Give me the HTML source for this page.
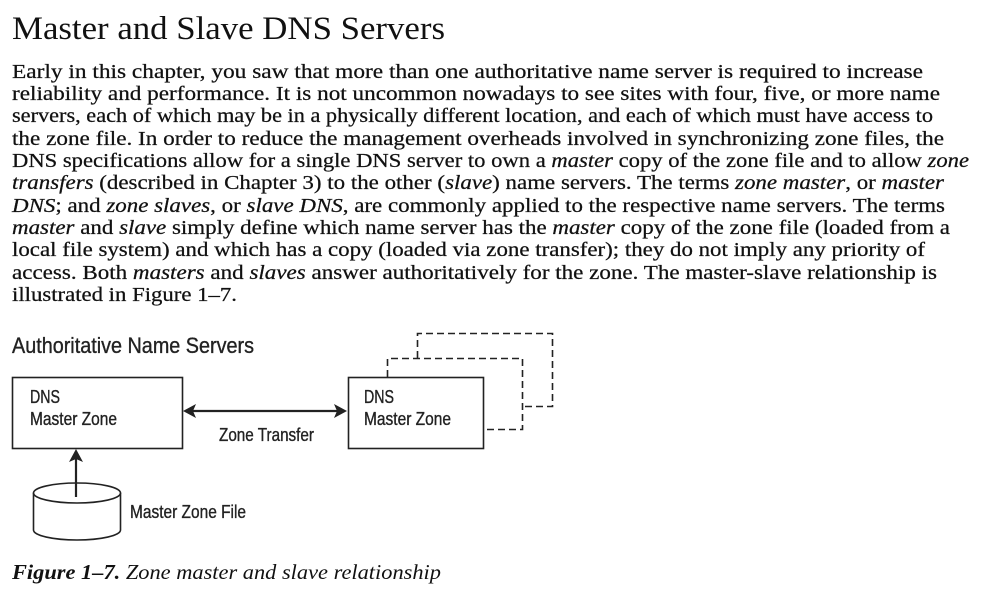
<!DOCTYPE html>
<html><head><meta charset="utf-8"><style>
html,body{margin:0;padding:0;background:#fff;width:988px;height:594px;overflow:hidden}
svg{display:block}
.s{font-family:"Liberation Serif",serif;font-size:20px;fill:#111;stroke:#111;stroke-width:0.25}
.d{font-family:"Liberation Sans",sans-serif;fill:#222;stroke:#222;stroke-width:0.35}
</style></head><body>
<svg width="988" height="594" viewBox="0 0 988 594" xmlns="http://www.w3.org/2000/svg">
<text x="12" y="39" font-family="Liberation Serif, serif" font-size="33" fill="#111" textLength="433" lengthAdjust="spacingAndGlyphs">Master and Slave DNS Servers</text>
<g class="s">
<text x="12" y="78" textLength="911" lengthAdjust="spacingAndGlyphs">Early in this chapter, you saw that more than one authoritative name server is required to increase</text>
<text x="12" y="100" textLength="928" lengthAdjust="spacingAndGlyphs">reliability and performance. It is not uncommon nowadays to see sites with four, five, or more name</text>
<text x="12" y="122" textLength="921" lengthAdjust="spacingAndGlyphs">servers, each of which may be in a physically different location, and each of which must have access to</text>
<text x="12" y="145" textLength="932" lengthAdjust="spacingAndGlyphs">the zone file. In order to reduce the management overheads involved in synchronizing zone files, the</text>
<text x="12" y="167" textLength="957" lengthAdjust="spacingAndGlyphs">DNS specifications allow for a single DNS server to own a <tspan font-style="italic">master</tspan> copy of the zone file and to allow <tspan font-style="italic">zone</tspan></text>
<text x="12" y="189" textLength="932" lengthAdjust="spacingAndGlyphs"><tspan font-style="italic">transfers</tspan> (described in Chapter 3) to the other (<tspan font-style="italic">slave</tspan>) name servers. The terms <tspan font-style="italic">zone master</tspan>, or <tspan font-style="italic">master</tspan></text>
<text x="12" y="212" textLength="933" lengthAdjust="spacingAndGlyphs"><tspan font-style="italic">DNS</tspan>; and <tspan font-style="italic">zone slaves</tspan>, or <tspan font-style="italic">slave DNS</tspan>, are commonly applied to the respective name servers. The terms</text>
<text x="12" y="234" textLength="938" lengthAdjust="spacingAndGlyphs"><tspan font-style="italic">master</tspan> and <tspan font-style="italic">slave</tspan> simply define which name server has the <tspan font-style="italic">master</tspan> copy of the zone file (loaded from a</text>
<text x="12" y="256" textLength="913" lengthAdjust="spacingAndGlyphs">local file system) and which has a copy (loaded via zone transfer); they do not imply any priority of</text>
<text x="12" y="279" textLength="925" lengthAdjust="spacingAndGlyphs">access. Both <tspan font-style="italic">masters</tspan> and <tspan font-style="italic">slaves</tspan> answer authoritatively for the zone. The master-slave relationship is</text>
<text x="12" y="301" textLength="225" lengthAdjust="spacingAndGlyphs">illustrated in Figure 1–7.</text>
</g>
<g class="d">
<text x="12" y="353" font-size="22" textLength="242" lengthAdjust="spacingAndGlyphs">Authoritative Name Servers</text>
<text x="30" y="403" font-size="18" textLength="30" lengthAdjust="spacingAndGlyphs">DNS</text>
<text x="30" y="425" font-size="18" textLength="87" lengthAdjust="spacingAndGlyphs">Master Zone</text>
<text x="364" y="403" font-size="18" textLength="30" lengthAdjust="spacingAndGlyphs">DNS</text>
<text x="364" y="425" font-size="18" textLength="87" lengthAdjust="spacingAndGlyphs">Master Zone</text>
<text x="219" y="441" font-size="18" textLength="95" lengthAdjust="spacingAndGlyphs">Zone Transfer</text>
<text x="130" y="518" font-size="18" textLength="116" lengthAdjust="spacingAndGlyphs">Master Zone File</text>
</g>
<g fill="none" stroke="#222" stroke-width="1.6">
<rect x="12.5" y="377.5" width="170" height="71"/>
<rect x="348.5" y="377.5" width="135" height="71"/>
<g stroke-dasharray="7,4">
<path d="M387.5 377 V358.5 H522.5 V429.5 H484"/>
<path d="M417.5 358 V333.5 H552.5 V406.5 H522"/>
</g>
<line x1="192" y1="411" x2="338" y2="411" stroke-width="2.2"/>
<line x1="76" y1="497" x2="76" y2="458" stroke-width="2.2"/>
<path d="M33.5 493 V530 A43.5 10 0 0 0 120.5 530 V493"/>
<ellipse cx="77" cy="493" rx="43.5" ry="10"/>
</g>
<g fill="#222">
<path d="M183 411 L196 404 L193 411 L196 418 Z"/>
<path d="M347 411 L334 404 L337 411 L334 418 Z"/>
<path d="M76 449 L69 462 L76 459 L83 462 Z"/>
</g>
<text x="12" y="579" font-family="Liberation Serif, serif" font-size="21" fill="#111" font-style="italic" textLength="429" lengthAdjust="spacingAndGlyphs"><tspan font-weight="bold">Figure 1–7.</tspan> Zone master and slave relationship</text>
</svg>
</body></html>
